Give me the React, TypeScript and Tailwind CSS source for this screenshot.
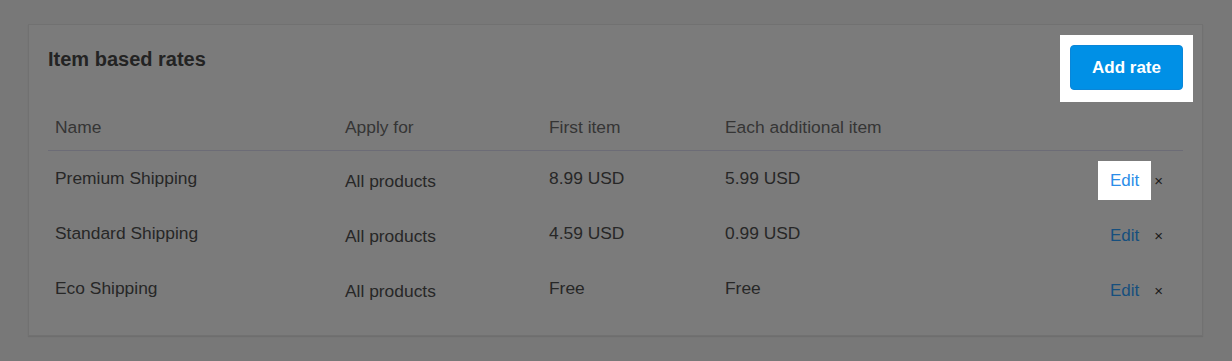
import React from "react";

const rows = [
  { name: "Premium Shipping", apply: "All products", first: "8.99 USD", each: "5.99 USD", hl: true },
  { name: "Standard Shipping", apply: "All products", first: "4.59 USD", each: "0.99 USD", hl: false },
  { name: "Eco Shipping", apply: "All products", first: "Free", each: "Free", hl: false },
];

export default function App() {
  return (
    <div className="min-h-[361px] w-[1232px] bg-[#787878] pt-[24px] pl-[28px] font-['Liberation_Sans',Arial,sans-serif]">
      <div className="w-[1175px] h-[312px] border border-[#717171] bg-[#7b7b7b] px-[19px] pt-[20px] shadow-[0_1px_1px_rgba(0,0,0,0.08)]">
        <div className="flex items-start justify-between">
          <h2 className="text-[20px] leading-7 font-bold text-[#232323]">Item based rates</h2>
          <div className="-m-[10px] -mb-[12px] p-[10px] pb-[12px] bg-white">
            <button className="h-[45px] w-[113px] rounded-[4px] border border-[#0a86d8] bg-[#0090e6] text-[17px] font-bold text-white">
              Add rate
            </button>
          </div>
        </div>

        <div className="mt-[15px] grid grid-cols-[290px_204px_176px_1fr_auto] border-b border-[#6c6c76] text-[17.4px] leading-6 text-[#353535]">
          <div className="pl-[7px] pt-[10px] pb-[11px]">Name</div>
          <div className="pl-[7px] pt-[10px] pb-[11px]">Apply for</div>
          <div className="pl-[7px] pt-[10px] pb-[11px]">First item</div>
          <div className="pl-[7px] pt-[10px] pb-[11px]">Each additional item</div>
          <div />
        </div>

        {rows.map((r) => (
          <div
            key={r.name}
            className="grid h-[55px] grid-cols-[290px_204px_176px_1fr_auto] items-start text-[17.4px] leading-6 text-[#272727]"
          >
            <div className="pl-[7px] pt-[15px]">{r.name}</div>
            <div className="pl-[7px] pt-[18px]">{r.apply}</div>
            <div className="pl-[7px] pt-[15px]">{r.first}</div>
            <div className="pl-[7px] pt-[15px]">{r.each}</div>
            <div className="flex items-center pt-[10px] pr-[20px]">
              <a
                className={
                  "px-[12px] pt-[8px] pb-[7px] text-[17px] " +
                  (r.hl ? "bg-white text-[#2b8de8]" : "text-[#164f7e]")
                }
              >
                Edit
              </a>
              <span className="ml-[3px] text-[15px] leading-none text-[#1a1a1a]">×</span>
            </div>
          </div>
        ))}
      </div>
    </div>
  );
}
